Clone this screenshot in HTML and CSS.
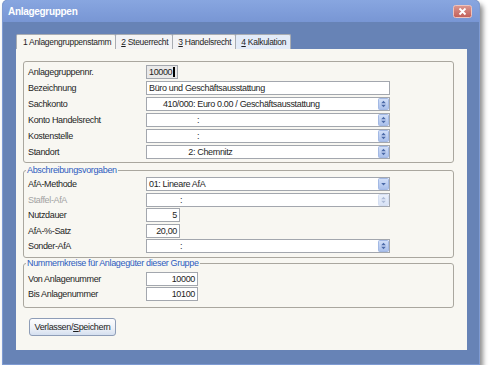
FILE: index.html
```html
<!DOCTYPE html>
<html>
<head>
  <title>Anlagegruppen</title>
  <link rel="stylesheet" href="styles.css">
</head>
<body>
  <div class="window">
    <div class="titlebar">
      <span class="title">Anlagegruppen</span>
      <svg class="close" width="19" height="13" viewBox="0 0 19 13">
        <defs>
          <linearGradient id="closeGrad" x1="0" y1="0" x2="0" y2="1">
            <stop offset="0" stop-color="#dc9790"/>
            <stop offset="1" stop-color="#c25f58"/>
          </linearGradient>
        </defs>
        <rect x="0.5" y="0.5" width="18" height="12" rx="2" fill="url(#closeGrad)" stroke="#eec3bd"/>
        <path d="M6.5 3.5 L12.5 9.5 M12.5 3.5 L6.5 9.5" stroke="#fff" stroke-width="1.8"/>
      </svg>
    </div>

    <div class="client">
      <div class="tabs">
        <div class="tab active">1 Anlagengruppenstamm</div>
        <div class="tab"><u>2</u> Steuerrecht</div>
        <div class="tab"><u>3</u> Handelsrecht</div>
        <div class="tab hot"><u>4</u> Kalkulation</div>
      </div>

      <div class="page">
        <!-- Stammdaten -->
        <fieldset class="group first">
          <div class="row">
            <label>Anlagegruppennr.</label>
            <div class="field nr">10000<span class="caret"></span></div>
          </div>
          <div class="row">
            <label>Bezeichnung</label>
            <div class="field wide">Büro und Geschäftsausstattung</div>
          </div>
          <div class="row">
            <label>Sachkonto</label>
            <div class="field wide combo"><span class="code">410/000</span>: Euro 0.00 / Geschäftsausstattung<svg class="spin" width="11" height="12"><use href="#spinIcon"/></svg></div>
          </div>
          <div class="row">
            <label>Konto Handelsrecht</label>
            <div class="field wide combo"><span class="code blank"></span>:<svg class="spin" width="11" height="12"><use href="#spinIcon"/></svg></div>
          </div>
          <div class="row">
            <label>Kostenstelle</label>
            <div class="field wide combo"><span class="code blank"></span>:<svg class="spin" width="11" height="12"><use href="#spinIcon"/></svg></div>
          </div>
          <div class="row">
            <label>Standort</label>
            <div class="field wide combo"><span class="code">2</span>: Chemnitz<svg class="spin" width="11" height="12"><use href="#spinIcon"/></svg></div>
          </div>
        </fieldset>

        <!-- Abschreibung -->
        <fieldset class="group afa">
          <legend>Abschreibungsvorgaben</legend>
          <div class="row">
            <label>AfA-Methode</label>
            <div class="field wide combo">01: Lineare AfA<svg class="spin" width="11" height="12"><use href="#dropIcon"/></svg></div>
          </div>
          <div class="row">
            <label class="disabled">Staffel-AfA</label>
            <div class="field wide combo short-code"><span class="code"></span>:<svg class="spin off" width="11" height="12"><use href="#spinIcon"/></svg></div>
          </div>
          <div class="row">
            <label>Nutzdauer</label>
            <div class="field num small">5</div>
          </div>
          <div class="row">
            <label>AfA-%-Satz</label>
            <div class="field num small">20,00</div>
          </div>
          <div class="row">
            <label>Sonder-AfA</label>
            <div class="field wide combo short-code"><span class="code"></span>:<svg class="spin" width="11" height="12"><use href="#spinIcon"/></svg></div>
          </div>
        </fieldset>

        <!-- Nummernkreise -->
        <fieldset class="group numbers">
          <legend>Nummernkreise für Anlagegüter dieser Gruppe</legend>
          <div class="row">
            <label>Von Anlagenummer</label>
            <div class="field num medium">10000</div>
          </div>
          <div class="row">
            <label>Bis Anlagenummer</label>
            <div class="field num medium">10100</div>
          </div>
        </fieldset>

        <button class="button">Verlassen/<u>S</u>peichern</button>
      </div>
    </div>
  </div>

  <svg width="0" height="0" class="defs">
    <defs>
      <linearGradient id="btnGrad" x1="0" y1="0" x2="0" y2="1">
        <stop offset="0" stop-color="#d3e0f8"/>
        <stop offset="1" stop-color="#a9bfea"/>
      </linearGradient>
      <symbol id="spinIcon" viewBox="0 0 11 12">
        <rect x="0.5" y="0.5" width="10" height="11" rx="1" fill="url(#btnGrad)" stroke="#a3b9e4"/>
        <path d="M3.2 5.2 L5.5 2.8 L7.8 5.2 Z M3.2 6.8 L5.5 9.2 L7.8 6.8 Z" fill="#4b6aa8"/>
      </symbol>
      <symbol id="dropIcon" viewBox="0 0 11 12">
        <rect x="0.5" y="0.5" width="10" height="11" rx="1" fill="url(#btnGrad)" stroke="#a3b9e4"/>
        <path d="M3.2 5 L7.8 5 L5.5 7.6 Z" fill="#4b6aa8"/>
      </symbol>
    </defs>
  </svg>
</body>
</html>
```

FILE: styles.css
```css
body {
  margin: 0;
  background: #fff;
  font-family: "Liberation Sans", Arial, sans-serif;
  font-size: 9px;
  letter-spacing: -0.35px;
  color: #1e1e1e;
}

.defs {
  position: absolute;
}

.window {
  margin-left: 2px;
  width: 478px;
  height: 365px;
  box-sizing: border-box;
  background: #6783b6;
  border: 1px solid #7f9bd2;
  border-top: none;
  border-radius: 5px 5px 0 0;
  box-shadow: 3px 4px 5px rgba(0, 0, 0, 0.45);
}

.titlebar {
  height: 22px;
  display: flex;
  align-items: center;
  padding: 0 7px 0 5px;
  background: linear-gradient(#88a6e0, #7896d4);
  border-radius: 5px 5px 0 0;
  color: #fff;
}

.title {
  font-weight: bold;
  font-size: 10px;
  letter-spacing: -0.3px;
}

.close {
  margin-left: auto;
}

.client {
  padding: 12px 12px 14px 13px;
}

.tabs {
  display: flex;
  height: 15px;
}

.tab {
  padding: 0 4px 0 5px;
  line-height: 14px;
  font-size: 8.5px;
  letter-spacing: -0.3px;
  border: 1px solid #a9adb3;
  border-bottom: none;
  margin-right: -1px;
  background: #f3f3f5;
  border-radius: 2px 2px 0 0;
}

.tab.active {
  background: #f8f7f2;
  padding: 0 4px 0 6px;
}

.tab.hot {
  background: #e3ebf8;
}

.page {
  height: 301px;
  box-sizing: border-box;
  background: #f8f7f2;
  padding: 12px 13px 0 7px;
}

.group {
  margin: 0;
  padding: 2px 0 2px 4px;
  border: 1px solid #aaa79f;
  border-radius: 3px;
  min-width: 0;
}

.group legend {
  padding: 0 1px;
  margin-left: -2px;
  line-height: 10px;
  color: #2d5cc0;
}

.afa {
  margin-top: 2px;
  padding-top: 1.5px;
  padding-bottom: 3px;
}

.afa .row {
  height: 15.5px;
}

.numbers {
  padding-top: 3px;
  padding-bottom: 6px;
}

.numbers .row {
  height: 15px;
}

.row {
  display: flex;
  align-items: center;
  height: 16px;
}

.row label {
  width: 118px;
}

.row label.disabled {
  color: #a3a3a3;
}

.field {
  height: 14px;
  box-sizing: border-box;
  display: flex;
  align-items: center;
  border: 1px solid #a3a7ae;
  background: #fff;
  padding: 0 0 0 2px;
  white-space: nowrap;
}

.field.nr {
  width: 32px;
  background: #e9e9e9;
}

.caret {
  width: 2px;
  height: 10px;
  margin-left: 1px;
  background: #000;
}

.field.wide {
  width: 244px;
}

.field.num {
  justify-content: flex-end;
  padding: 0 2px 0 0;
}

.field.small {
  width: 34px;
}

.field.medium {
  width: 52px;
}

.code {
  display: inline-block;
  width: 44px;
  text-align: right;
}

.code.blank {
  width: 48px;
}

.short-code .code {
  width: 31px;
}

.spin {
  margin-left: auto;
  flex-shrink: 0;
}

.spin.off {
  opacity: 0.45;
}

.button {
  display: block;
  margin: 10px 0 0 6px;
  width: 87px;
  height: 18px;
  padding: 0;
  border: 1px solid #8e9db7;
  border-radius: 3px;
  background: linear-gradient(#fdfdfe, #eef1f7 55%, #d5dff0);
  font-family: inherit;
  font-size: 9px;
  letter-spacing: -0.35px;
  color: #1e1e1e;
}
```
